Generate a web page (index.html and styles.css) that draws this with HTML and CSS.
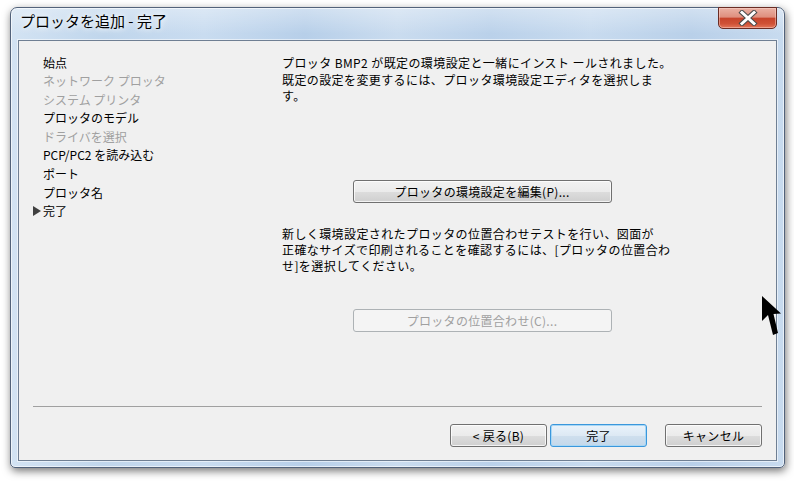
FILE: index.html
```html
<!DOCTYPE html>
<html lang="ja">
<head>
<meta charset="utf-8">
<title>プロッタを追加 - 完了</title>
<link rel="stylesheet" href="styles.css">
</head>
<body>
<div class="window">
  <div class="titlebar">
    <span class="title">プロッタを追加 - 完了</span>
    <button class="close" aria-label="閉じる">
      <svg width="22" height="16" viewBox="0 0 22 16">
        <path d="M5 2.5 L17 13.5 M17 2.5 L5 13.5" stroke="#4a4a4a" stroke-width="5" stroke-linecap="square" fill="none"/>
        <path d="M5 2.5 L17 13.5 M17 2.5 L5 13.5" stroke="#ffffff" stroke-width="3" stroke-linecap="square" fill="none"/>
      </svg>
    </button>
  </div>
  <div class="client">
    <div class="main">
      <ul class="steps">
        <li>始点</li>
        <li class="off">ネットワーク プロッタ</li>
        <li class="off">システム プリンタ</li>
        <li>プロッタのモデル</li>
        <li class="off">ドライバを選択</li>
        <li>PCP/PC2 を読み込む</li>
        <li>ポート</li>
        <li>プロッタ名</li>
        <li class="current"><span class="pointer"></span>完了</li>
      </ul>
      <div class="content">
        <p class="msg">プロッタ BMP2 が既定の環境設定と一緒にインスト ールされました。<br>既定の設定を変更するには、プロッタ環境設定エディタを選択しま<br>す。</p>
        <div class="btn-row first"><button class="btn wide">プロッタの環境設定を編集(P)...</button></div>
        <p class="msg second">新しく環境設定されたプロッタの位置合わせテストを行い、図面が<br>正確なサイズで印刷されることを確認するには、[プロッタの位置合わ<br>せ]を選択してください。</p>
        <div class="btn-row last"><button class="btn wide" disabled>プロッタの位置合わせ(C)...</button></div>
      </div>
    </div>
    <div class="sep"></div>
    <div class="footer">
      <button class="btn">&lt; 戻る(B)</button>
      <button class="btn default">完了</button>
      <button class="btn cancel">キャンセル</button>
    </div>
  </div>
</div>
<svg class="cursor" width="20" height="40" viewBox="0 0 20 40">
  <path d="M0 0 L0 25 L6 19 L11 39 L16 37 L11.5 18 L19 17.5 Z" fill="#000"/>
</svg>
</body>
</html>
```
FILE: styles.css
```css
* { box-sizing: border-box; }

body {
  margin: 0;
  width: 794px;
  height: 481px;
  overflow: hidden;
  background: #ffffff;
  font-family: "Noto Sans CJK JP", "Noto Sans", sans-serif;
  font-size: 12px;
  color: #000;
  position: relative;
}

.window {
  margin: 7px 0 0 10px;
  width: 775px;
  height: 461px;
  border: 1px solid #52627a;
  border-radius: 7px 7px 5px 5px;
  padding: 0 7px 6px 7px;
  display: flex;
  flex-direction: column;
  background:
    linear-gradient(180deg, rgba(255,255,255,0.35) 0px, rgba(255,255,255,0) 26px),
    linear-gradient(90deg, #d3e3f3 0%, #c0d6ec 12%, #c9dcf0 25%, #b7cfe9 38%, #cadcef 50%, #bad1ea 62%, #c8dbef 75%, #b9d0e9 88%, #c8dbef 100%);
  box-shadow: inset 0 0 0 1px rgba(255,255,255,0.6), 1px 3px 8px rgba(0,0,0,0.55);
}

.titlebar {
  height: 32px;
  display: flex;
  align-items: flex-start;
  justify-content: space-between;
}

.title {
  margin: 3px 0 0 2px;
  font-size: 15px;
  line-height: 20px;
  color: #000;
  text-shadow: 0 0 5px rgba(255,255,255,0.95), 0 0 10px rgba(255,255,255,0.8);
}

.close {
  width: 59px;
  height: 22px;
  padding: 0;
  margin: -1px 0 0 0;
  border: 1px solid #6a2c24;
  border-radius: 0 0 5px 5px;
  background: linear-gradient(180deg, #eab1a4 0%, #df8f7e 45%, #c7442c 52%, #cf5136 78%, #e3765a 100%);
  box-shadow: inset 0 0 0 1px rgba(255,220,210,0.45);
  display: flex;
  align-items: center;
  justify-content: center;
}

.client {
  flex: 1;
  border: 1px solid #6f7f93;
  background: #f0f0f0;
  display: flex;
  flex-direction: column;
  box-shadow: 0 0 0 1px rgba(255,255,255,0.55);
}

.main {
  height: 365px;
  display: flex;
}

.steps {
  list-style: none;
  margin: 0;
  padding: 12.5px 0 0 24px;
  width: 263px;
  line-height: 18.6px;
}

.steps li { white-space: nowrap; }
.steps .off { color: #a0a0a0; }

.pointer {
  display: inline-block;
  width: 0;
  height: 0;
  margin-left: -10px;
  margin-right: 2px;
  border-top: 5px solid transparent;
  border-bottom: 5px solid transparent;
  border-left: 8px solid #404040;
}

.content {
  width: 400px;
  padding-top: 14px;
}

.msg {
  margin: 0;
  line-height: 16.5px;
  letter-spacing: 0.4px;
  white-space: nowrap;
}

.msg.second {
  margin-top: 23px;
  line-height: 16.3px;
}

.btn-row {
  display: flex;
  justify-content: center;
}

.btn-row.first { margin-top: 75px; }
.btn-row.last { margin-top: 35px; }

.btn {
  font-family: inherit;
  font-size: 12px;
  letter-spacing: 0.3px;
  color: #000;
  height: 23px;
  width: 97px;
  padding: 0;
  border: 1px solid #707070;
  border-radius: 3px;
  background: linear-gradient(180deg, #f2f2f2 0%, #ebebeb 50%, #dddddd 50%, #cfcfcf 100%);
  box-shadow: inset 0 0 0 1px rgba(255,255,255,0.75);
}

.btn.wide { width: 259px; }

.btn:disabled {
  color: #a0a0a0;
  border-color: #adb2b5;
  background: #f4f4f4;
  box-shadow: none;
}

.btn.default {
  border-color: #3a97dc;
  background: linear-gradient(180deg, #eaf3fb 0%, #dde9f4 50%, #cfdfee 50%, #c4d8ea 100%);
  box-shadow: inset 0 0 0 1px #a8d7f5;
}

.sep {
  height: 1px;
  margin: 0 14px;
  background: #a0a0a0;
}

.footer {
  display: flex;
  justify-content: flex-end;
  gap: 3px;
  padding: 17px 14px 0 0;
}

.footer .cancel { margin-left: 15px; }

.cursor {
  position: absolute;
  left: 762px;
  top: 296px;
}
```
